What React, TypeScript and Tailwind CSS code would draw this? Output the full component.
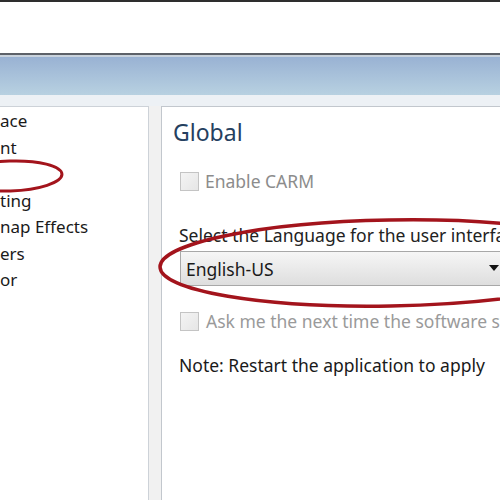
import React from 'react';

const sideItems = ['ace', 'nt', '', 'ting', 'nap Effects', 'ers', 'or'];

function Checkbox() {
  return (
    <span className="inline-block shrink-0 w-[19px] h-[19px] border border-[#c4c4c4] bg-gradient-to-br from-[#f4f4f4] to-[#e6e6e6]" />
  );
}

export default function App() {
  return (
    <div
      className="relative w-[500px] h-[500px] overflow-hidden bg-white flex flex-col"
      style={{ fontFamily: '"Noto Sans", "Open Sans", sans-serif' }}
    >
      {/* window chrome */}
      <div className="h-[2px] bg-[#2e2e2e]" />
      <div className="h-[51px] bg-white" />
      <div className="h-[2px] bg-[#5d6269]" />
      <div className="h-[2px] bg-[#c9d3dd]" />
      <div className="h-[38px] bg-gradient-to-b from-[#99b2d3] to-[#b8d1e1]" />
      <div className="h-[11px] bg-[#edf1f5]" />

      <div className="flex flex-1 min-h-0">
        {/* category list */}
        <div className="w-[149px] shrink-0 bg-white border-t border-r border-[#cdd2d8] pt-[1px] text-[17px] text-[#1a1a1a] overflow-hidden">
          {sideItems.map((item, i) => (
            <div key={i} className="h-[26.5px] leading-[26px] whitespace-nowrap">
              {item}
            </div>
          ))}
        </div>

        <div className="w-[12px] shrink-0 bg-[#f1f1f1]" />

        {/* settings page */}
        <div className="flex-1 min-w-0 overflow-hidden bg-white border-t border-l border-[#c2c7cd] pl-[11px] pt-[11px] text-[17.5px]">
          <div className="text-[23px] leading-[28px] text-[#25405f]">Global</div>

          <div className="flex items-center gap-[6px] mt-[22px] ml-[7px] text-[#8c8c8c]">
            <Checkbox />
            <span>Enable CARM</span>
          </div>

          <div className="mt-[30px] ml-[6px] leading-[22px] text-[#222] whitespace-nowrap">
            Select the Language for the user interface
          </div>

          <div className="mt-[5px] ml-[7px] h-[35px] w-[340px] shrink-0 border border-[#a8a8a8] bg-gradient-to-b from-[#f6f6f6] to-[#dedede] flex items-center pl-[5px] text-[#1a1a1a] relative">
            English-US
            <span className="absolute left-[308px] top-[13px] w-0 h-0 border-l-[5px] border-r-[5px] border-t-[6px] border-l-transparent border-r-transparent border-t-[#111]" />
          </div>

          <div className="flex items-center gap-[7px] mt-[22px] ml-[7px] text-[#9a9a9a] whitespace-nowrap">
            <Checkbox />
            <span>Ask me the next time the software starts</span>
          </div>

          <div className="mt-[17px] ml-[6px] text-[#1a1a1a] whitespace-nowrap">
            Note: Restart the application to apply
          </div>
        </div>
      </div>

      {/* red annotation marks */}
      <svg className="absolute inset-0 pointer-events-none" width="500" height="500">
        <ellipse cx="10" cy="176" rx="52" ry="15" fill="none" stroke="#a3141c" strokeWidth="3" transform="rotate(-2 10 176)" />
        <ellipse cx="390" cy="263" rx="230" ry="43" fill="none" stroke="#a3141c" strokeWidth="3.5" transform="rotate(-1 390 263)" />
      </svg>
    </div>
  );
}
